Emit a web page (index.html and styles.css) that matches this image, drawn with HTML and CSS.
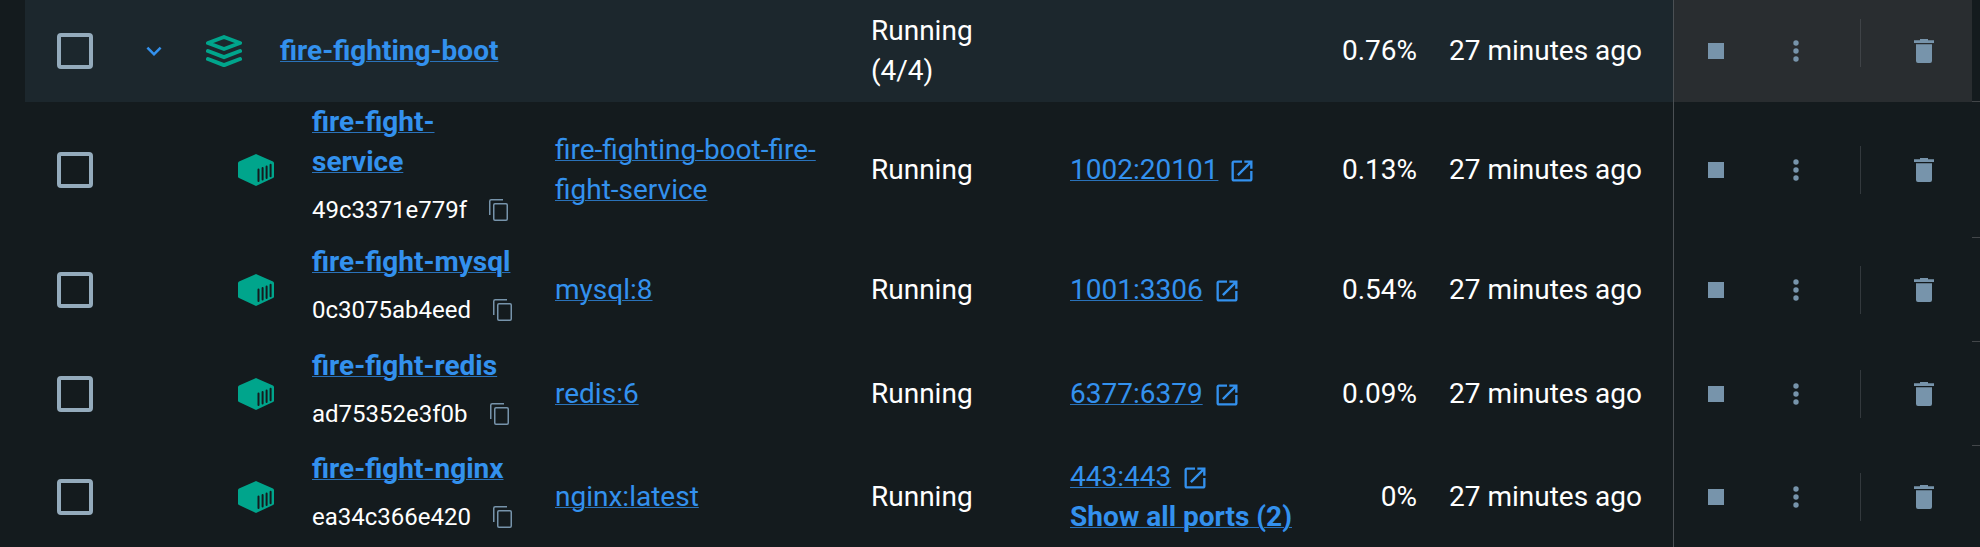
FILE: index.html
```
<!DOCTYPE html>
<html lang="en">
<head>
  <meta charset="UTF-8">
  <title>Containers</title>
  <link rel="stylesheet" href="styles.css">
</head>
<body>
  <!-- shared icons -->
  <svg class="sprite" aria-hidden="true">
    <symbol id="icon-chevron" viewBox="0 0 24 24">
      <path d="M16.59 8.59 12 13.17 7.41 8.59 6 10l6 6 6-6z" fill="currentColor"/>
    </symbol>
    <symbol id="icon-stack" viewBox="0 0 36 32">
      <g fill="none" stroke="currentColor" stroke-width="4" stroke-linejoin="round" stroke-linecap="round">
        <path d="M18 2 34 8 18 14 2 8z"/>
        <path d="M2 16 18 22.200 34 16"/>
        <path d="M2 24 18 30.200 34 24"/>
      </g>
    </symbol>
    <symbol id="icon-container" viewBox="0 0 36 32">
      <path d="M17 .4q1-.6 2 0L35 7.600q1 .5 1 1.600V22.500q0 1-1 1.500L19 31.600q-1 .6-2 0L1 24q-1-.5-1-1.500V9.200Q0 8.100 1 7.600z" fill="currentColor"/>
      <path d="M20.500 15.500v11.500M24.600 14v11.500M28.600 12.500v11.500M32.600 10.800v11.500" stroke="#141b1e" stroke-width="2" stroke-linecap="round"/>
    </symbol>
    <symbol id="icon-copy" viewBox="0 0 24 24">
      <g fill="none" stroke="currentColor" stroke-width="1.500">
        <path d="M2.750 17V3.250q0-1.500 1.500-1.500H16"/>
        <rect x="6.750" y="5.750" width="13.500" height="16.500" rx="1.200"/>
      </g>
    </symbol>
    <symbol id="icon-open" viewBox="0 0 24 24">
      <path d="M19 19H5V5h7V3H5c-1.110 0-2 .9-2 2v14c0 1.100.89 2 2 2h14c1.100 0 2-.9 2-2v-7h-2v7zM14 3v2h3.590l-9.830 9.830 1.410 1.410L19 6.410V10h2V3h-7z" fill="currentColor"/>
    </symbol>
    <symbol id="icon-stop" viewBox="0 0 32 32">
      <path d="M8 8h16v16H8z" fill="currentColor"/>
    </symbol>
    <symbol id="icon-more" viewBox="0 0 32 32">
      <g fill="currentColor"><circle cx="16" cy="8" r="2.700"/><circle cx="16" cy="16" r="2.700"/><circle cx="16" cy="24" r="2.700"/></g>
    </symbol>
    <symbol id="icon-trash" viewBox="0 0 32 32">
      <path d="M12 4h8v1.300h6V8H6V5.300h6zM8 9.300h16V26q0 2-2 2H10q-2 0-2-2z" fill="currentColor"/>
    </symbol>
  </svg>

  <table class="containers">
    <colgroup>
      <col class="col-check">
      <col class="col-toggle">
      <col class="col-name">
      <col class="col-image">
      <col class="col-status">
      <col class="col-ports">
      <col class="col-cpu">
      <col class="col-started">
      <col class="col-actions">
      <col class="col-edge">
    </colgroup>
    <tbody>
      <tr class="group">
        <td class="check"><input type="checkbox" aria-label="Select fire-fighting-boot"></td>
        <td class="toggle"><button type="button" aria-label="Collapse"><svg width="30" height="30"><use href="#icon-chevron"/></svg></button></td>
        <td>
          <div class="name">
            <svg class="type" width="36" height="32"><use href="#icon-stack"/></svg>
            <a class="title" href="#">fire-fighting-boot</a>
          </div>
        </td>
        <td></td>
        <td class="text">Running (4/4)</td>
        <td></td>
        <td class="text cpu">0.76%</td>
        <td class="text">27 minutes ago</td>
        <td class="actions-cell">
          <div class="actions">
            <button type="button" aria-label="Stop"><svg width="32" height="32"><use href="#icon-stop"/></svg></button>
            <button type="button" aria-label="More"><svg width="32" height="32"><use href="#icon-more"/></svg></button>
            <span class="divider"></span>
            <button type="button" aria-label="Delete"><svg width="32" height="32"><use href="#icon-trash"/></svg></button>
          </div>
        </td>
        <td class="edge"></td>
      </tr>
      <tr>
        <td class="check"><input type="checkbox" aria-label="Select fire-fight-service"></td>
        <td></td>
        <td>
          <div class="name child">
            <svg class="type" width="36" height="32"><use href="#icon-container"/></svg>
            <div>
              <a class="title" href="#">fire-fight-service</a>
              <div class="id">49c3371e779f <button type="button" aria-label="Copy ID"><svg width="24" height="24"><use href="#icon-copy"/></svg></button></div>
            </div>
          </div>
        </td>
        <td class="text"><a href="#">fire-fighting-boot-fire-fight-service</a></td>
        <td class="text">Running</td>
        <td class="text">
          <div class="port"><a href="#">1002:20101</a><svg width="28" height="28"><use href="#icon-open"/></svg></div>
        </td>
        <td class="text cpu">0.13%</td>
        <td class="text">27 minutes ago</td>
        <td class="actions-cell">
          <div class="actions">
            <button type="button" aria-label="Stop"><svg width="32" height="32"><use href="#icon-stop"/></svg></button>
            <button type="button" aria-label="More"><svg width="32" height="32"><use href="#icon-more"/></svg></button>
            <span class="divider"></span>
            <button type="button" aria-label="Delete"><svg width="32" height="32"><use href="#icon-trash"/></svg></button>
          </div>
        </td>
        <td class="edge"></td>
      </tr>
      <tr>
        <td class="check"><input type="checkbox" aria-label="Select fire-fight-mysql"></td>
        <td></td>
        <td>
          <div class="name child">
            <svg class="type" width="36" height="32"><use href="#icon-container"/></svg>
            <div>
              <a class="title" href="#">fire-fight-mysql</a>
              <div class="id">0c3075ab4eed <button type="button" aria-label="Copy ID"><svg width="24" height="24"><use href="#icon-copy"/></svg></button></div>
            </div>
          </div>
        </td>
        <td class="text"><a href="#">mysql:8</a></td>
        <td class="text">Running</td>
        <td class="text">
          <div class="port"><a href="#">1001:3306</a><svg width="28" height="28"><use href="#icon-open"/></svg></div>
        </td>
        <td class="text cpu">0.54%</td>
        <td class="text">27 minutes ago</td>
        <td class="actions-cell">
          <div class="actions">
            <button type="button" aria-label="Stop"><svg width="32" height="32"><use href="#icon-stop"/></svg></button>
            <button type="button" aria-label="More"><svg width="32" height="32"><use href="#icon-more"/></svg></button>
            <span class="divider"></span>
            <button type="button" aria-label="Delete"><svg width="32" height="32"><use href="#icon-trash"/></svg></button>
          </div>
        </td>
        <td class="edge"></td>
      </tr>
      <tr>
        <td class="check"><input type="checkbox" aria-label="Select fire-fight-redis"></td>
        <td></td>
        <td>
          <div class="name child">
            <svg class="type" width="36" height="32"><use href="#icon-container"/></svg>
            <div>
              <a class="title" href="#">fire-fight-redis</a>
              <div class="id">ad75352e3f0b <button type="button" aria-label="Copy ID"><svg width="24" height="24"><use href="#icon-copy"/></svg></button></div>
            </div>
          </div>
        </td>
        <td class="text"><a href="#">redis:6</a></td>
        <td class="text">Running</td>
        <td class="text">
          <div class="port"><a href="#">6377:6379</a><svg width="28" height="28"><use href="#icon-open"/></svg></div>
        </td>
        <td class="text cpu">0.09%</td>
        <td class="text">27 minutes ago</td>
        <td class="actions-cell">
          <div class="actions">
            <button type="button" aria-label="Stop"><svg width="32" height="32"><use href="#icon-stop"/></svg></button>
            <button type="button" aria-label="More"><svg width="32" height="32"><use href="#icon-more"/></svg></button>
            <span class="divider"></span>
            <button type="button" aria-label="Delete"><svg width="32" height="32"><use href="#icon-trash"/></svg></button>
          </div>
        </td>
        <td class="edge"></td>
      </tr>
      <tr class="last">
        <td class="check"><input type="checkbox" aria-label="Select fire-fight-nginx"></td>
        <td></td>
        <td>
          <div class="name child">
            <svg class="type" width="36" height="32"><use href="#icon-container"/></svg>
            <div>
              <a class="title" href="#">fire-fight-nginx</a>
              <div class="id">ea34c366e420 <button type="button" aria-label="Copy ID"><svg width="24" height="24"><use href="#icon-copy"/></svg></button></div>
            </div>
          </div>
        </td>
        <td class="text"><a href="#">nginx:latest</a></td>
        <td class="text">Running</td>
        <td class="text">
          <div class="port"><a href="#">443:443</a><svg width="28" height="28"><use href="#icon-open"/></svg></div>
          <a class="title" href="#">Show all ports (2)</a>
        </td>
        <td class="text cpu">0%</td>
        <td class="text">27 minutes ago</td>
        <td class="actions-cell">
          <div class="actions">
            <button type="button" aria-label="Stop"><svg width="32" height="32"><use href="#icon-stop"/></svg></button>
            <button type="button" aria-label="More"><svg width="32" height="32"><use href="#icon-more"/></svg></button>
            <span class="divider"></span>
            <button type="button" aria-label="Delete"><svg width="32" height="32"><use href="#icon-trash"/></svg></button>
          </div>
        </td>
        <td class="edge"></td>
      </tr>
    </tbody>
  </table>
</body>
</html>
```
FILE: styles.css
```
* {
  box-sizing: border-box;
}
body {
  margin: 0;
  padding-left: 25px;
  background-color: #141b1e;
  color: #fff;
  font-family: Roboto, "Liberation Sans", sans-serif;
  font-size: 28px;
  line-height: 40px;
}
.sprite {
  display: none;
}
svg {
  display: block;
  flex: none;
}
a {
  color: #3391ee;
  text-decoration: underline;
  text-decoration-color: #2a72b9;
  text-decoration-thickness: 1px;
}
button {
  display: flex;
  align-items: center;
  justify-content: center;
  padding: 0;
  border: 0;
  background: none;
  color: #7794ab;
  cursor: pointer;
}

/* table */
.containers {
  width: 100%;
  table-layout: fixed;
  border-spacing: 0;
}
.col-check { width: 100px; }
.col-toggle { width: 58px; }
.col-name { width: 356px; }
.col-status { width: 199px; }
.col-ports { width: 262px; }
.col-cpu { width: 117px; }
.col-started { width: 240px; }
.col-actions { width: 299px; }
.col-edge { width: 8px; }

tr {
  height: 104px;
}
td {
  padding: 0;
  vertical-align: middle;
}
.text {
  padding: 0 16px;
}
.cpu {
  text-align: right;
}
.group {
  height: 102px;
}
.group td {
  background-color: #1c272d;
}
.last {
  height: 101px;
}

/* first columns */
input[type="checkbox"] {
  appearance: none;
  display: block;
  width: 36px;
  height: 36px;
  margin: 0 auto;
  border: 4px solid #94abbc;
  border-radius: 4px;
}
.toggle button {
  width: 32px;
  height: 32px;
  margin: 0 auto;
  color: #3391ee;
}
.name {
  display: flex;
  align-items: center;
  gap: 38px;
  padding: 0 16px 0 23px;
}
.name.child {
  padding-left: 55px;
}
.type {
  color: #00a58c;
}
.title {
  font-weight: 700;
}
.id {
  display: flex;
  align-items: center;
  gap: 20px;
  height: 56px;
  font-size: 24px;
}
.port {
  display: flex;
  align-items: center;
  gap: 10px;
}
.port svg {
  margin-top: 2px;
  color: #3391ee;
}

/* actions */
.actions-cell {
  border-left: 1px solid #4b5054;
}
.group .actions-cell {
  background-color: #292d30;
}
.actions {
  display: flex;
  align-items: center;
  gap: 16px;
  padding-left: 10px;
}
.actions button {
  width: 64px;
  height: 64px;
}
.divider {
  width: 1px;
  height: 48px;
  margin: 0 15px 0 16px;
  background-color: #33393d;
}
.group .divider {
  margin-bottom: 16px;
  background-color: #3f4347;
}
.containers .edge {
  background-color: #141b1e;
  border-bottom: 1px solid #43474a;
}
.last .edge {
  border-bottom: 0;
}
```
